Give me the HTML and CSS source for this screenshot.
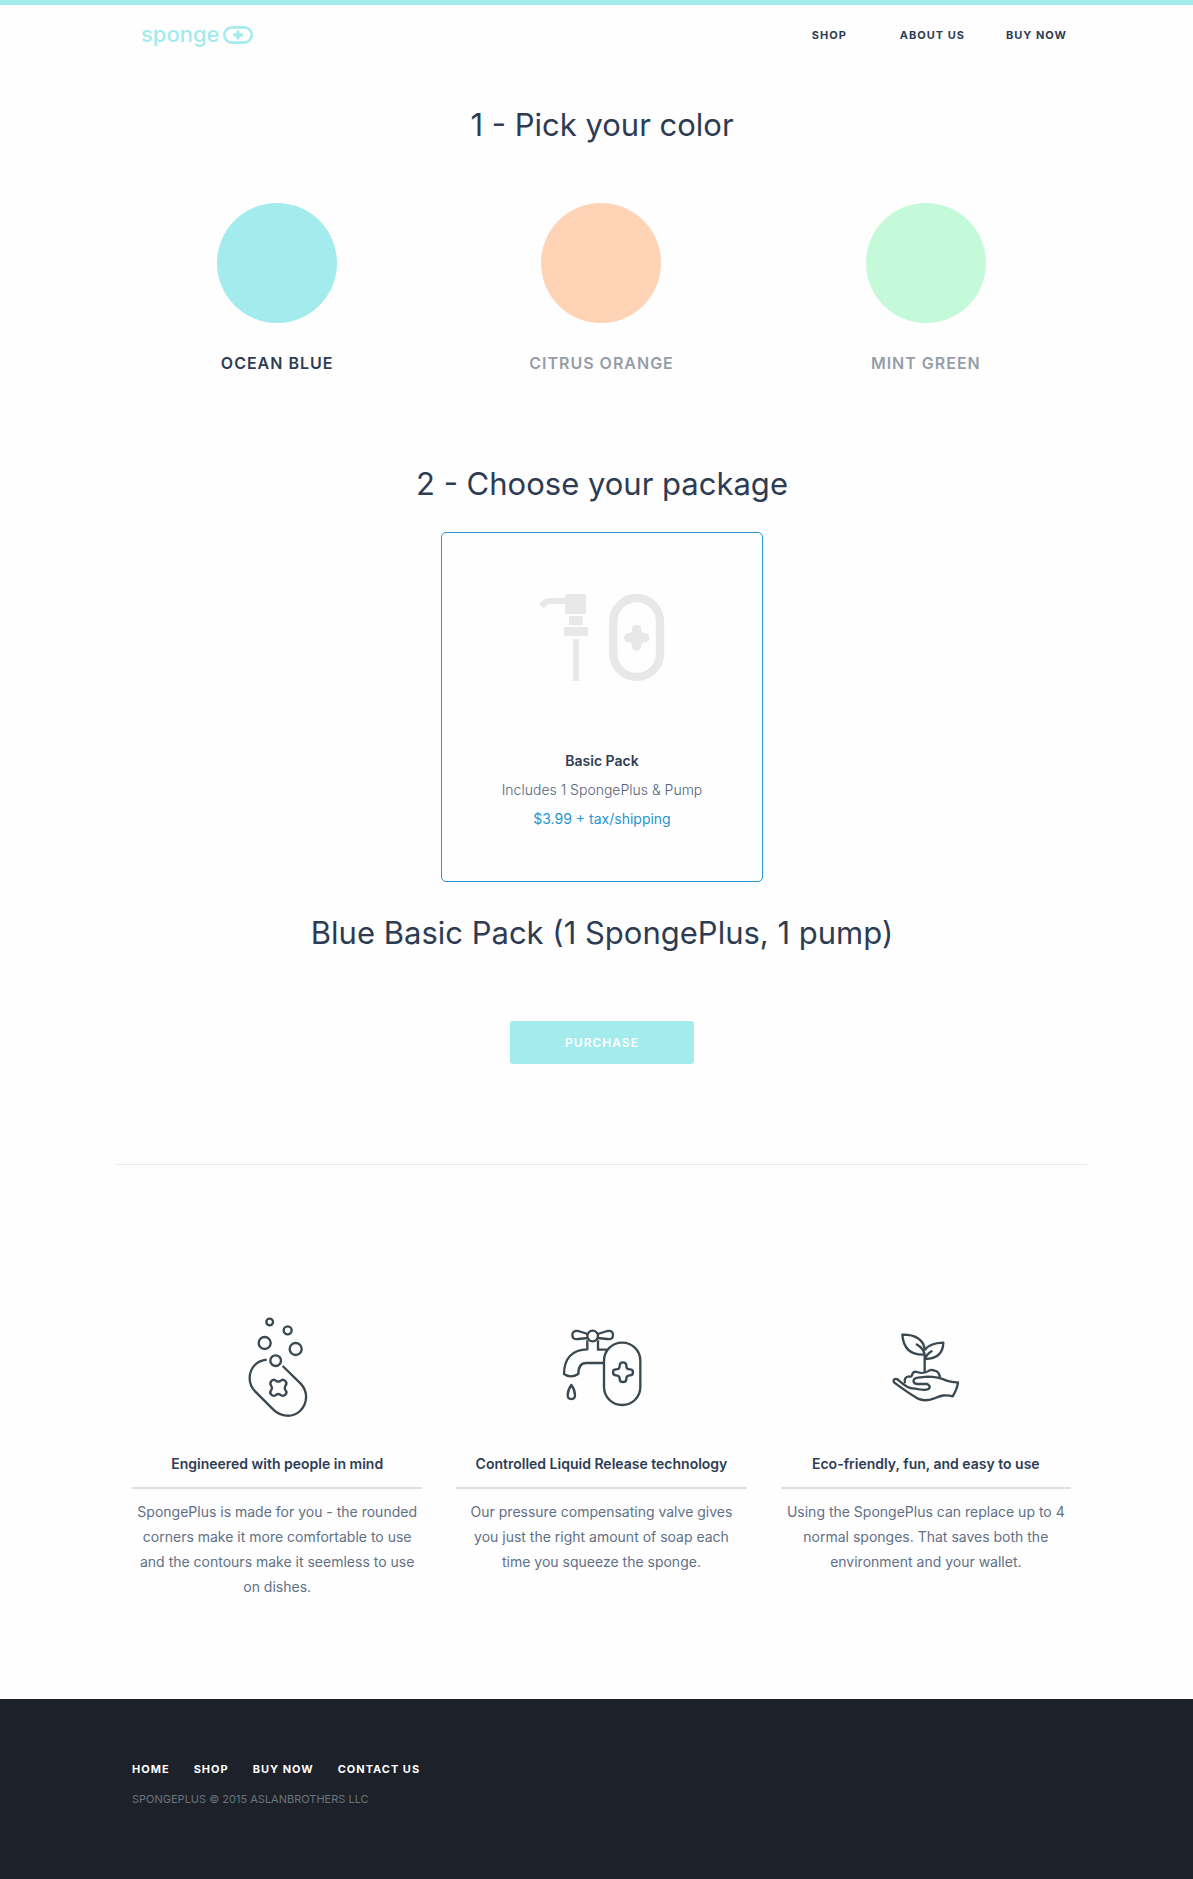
FILE: index.html
```html
<!DOCTYPE html>
<html lang="en">
<head>
<meta charset="utf-8">
<meta name="viewport" content="width=device-width, initial-scale=1">
<title>SpongePlus - Shop</title>
<link rel="stylesheet" href="styles.css">
</head>
<body>
<header class="site-header">
  <div class="container header-row">
    <a class="logo" href="#">
      <span>sponge</span>
      <svg class="logo-mark" viewBox="0 0 90 54" aria-hidden="true">
        <rect x="4" y="4" width="82" height="46" rx="23" fill="none" stroke="currentColor" stroke-width="8"/>
        <path d="M45 13c4 0 5 3 5 8 1 1 2 1 3 1 5 0 7 2 7 5s-2 5-7 5c-1 0-2 0-3 1 0 5-1 8-5 8s-5-3-5-8c-1-1-2-1-3-1-5 0-7-2-7-5s2-5 7-5c1 0 2 0 3-1 0-5 1-8 5-8z" fill="currentColor"/>
      </svg>
    </a>
    <nav class="main-nav" aria-label="Main">
      <a class="nav-lead" href="#">SHOP</a>
      <a href="#">ABOUT US</a>
      <a href="#">BUY NOW</a>
    </nav>
  </div>
</header>

<main class="container">
  <form class="order">
    <h1 class="heading" id="color-heading">1 - Pick your color</h1>
    <div class="colors" role="radiogroup" aria-labelledby="color-heading">
      <label class="color"><input class="swatch blue" type="radio" name="color" value="blue" checked><span>OCEAN BLUE</span></label>
      <label class="color"><input class="swatch orange" type="radio" name="color" value="orange"><span>CITRUS ORANGE</span></label>
      <label class="color"><input class="swatch green" type="radio" name="color" value="green"><span>MINT GREEN</span></label>
    </div>

    <h2 class="heading">2 - Choose your package</h2>
    <button class="package" type="button" aria-pressed="true">
      <svg class="package-icon" viewBox="-9 0 510 390" aria-hidden="true">
        <g fill="#e8e8e8">
          <path d="M57 103Q71 84 90 84H135V76Q137 74 143 73Q167 69 192 73Q198 74 198 77V129Q198 132 195 132H138Q135 132 135 129V102H92Q82 102 72 114z"/>
          <rect x="147" y="138" width="41" height="27" rx="2"/>
          <rect x="132" y="171" width="72" height="27" rx="2"/>
          <rect x="159" y="207" width="18" height="126" rx="2"/>
          <path d="M350 165c9 0 14 6 14 14 0 8 4 11 11 11 8 0 13 6 13 13s-5 14-13 14c-7 0-11 3-11 10 0 9-5 15-14 15s-14-6-14-15c0-7-4-10-11-10-8 0-13-6-13-14s5-13 13-13c7 0 11-3 11-11 0-8 5-14 14-14z"/>
        </g>
        <rect x="280" y="84" width="140" height="237" rx="70" fill="none" stroke="#e8e8e8" stroke-width="25"/>
      </svg>
      <span class="package-name">Basic Pack</span>
      <span class="package-info">Includes 1 SpongePlus &amp; Pump</span>
      <span class="package-price">$3.99 + tax/shipping</span>
    </button>

    <h2 class="heading">Blue Basic Pack (1 SpongePlus, 1 pump)</h2>
    <button class="purchase" type="submit">PURCHASE</button>
  </form>

  <hr class="divider">

  <section class="features" aria-label="Features">
    <article class="feature">
      <svg class="feature-icon" viewBox="-9 0 300 390" aria-hidden="true">
        <circle cx="119" cy="66" r="10"/>
        <circle cx="173" cy="91" r="12"/>
        <circle cx="104" cy="129" r="18"/>
        <circle cx="197" cy="147" r="18"/>
        <circle cx="137" cy="182" r="16"/>
        <path d="M110 179C75 183 59 208 59 235C59 252 66 265 76 275L130 329C153 352 189 353 210 333C234 310 234 274 212 251L158 198"/>
        <path d="M124 243c5-5 11-4 15 0q6 4 12 0c4-4 10-5 15 0s4 10 0 15q-4 6 0 12c4 4 4 10 0 14-5 5-11 4-15 0q-6-4-12 0c-4 4-10 5-15 0-4-4-4-10 0-14q4-6 0-12c-4-5-4-10 0-15z"/>
      </svg>
      <h3>Engineered with people in mind</h3>
      <p>SpongePlus is made for you - the rounded corners make it more comfortable to use and the contours make it seemless to use on dishes.</p>
    </article>
    <article class="feature">
      <svg class="feature-icon" viewBox="18 -30 300 390" aria-hidden="true">
        <circle cx="143" cy="78" r="16"/>
        <path d="M128 72L100 63C88 61 82 66 82 75S88 89 100 87L128 84M158 72L187 63C199 61 204 66 204 75S199 89 187 87L158 84"/>
        <path d="M127 91V118C83 118 57 145 57 192Q77 206 100 192C100 170 107 159 124 159H177M159 91V119H187"/>
        <path d="M79 225C85 233 90 246 90 256C90 271 68 271 68 256C68 246 73 233 79 225z"/>
        <rect x="177" y="98" width="109" height="187" rx="54"/>
        <path d="M234 157c6 0 10 4 10 10 0 8 4 11 11 11s9 4 9 9-3 9-9 9c-7 0-11 3-11 10 0 6-4 10-10 10s-10-4-10-10c0-7-4-10-11-10-5 0-9-4-9-9s4-9 9-9c7 0 11-3 11-11 0-6 4-10 10-10z"/>
      </svg>
      <h3>Controlled Liquid Release technology</h3>
      <p>Our pressure compensating valve gives you just the right amount of soap each time you squeeze the sponge.</p>
    </article>
    <article class="feature">
      <svg class="feature-icon" viewBox="-12 -60 300 390" aria-hidden="true">
        <path d="M134 156V101M108 72Q132 85 134 106M157 92Q138 103 134 120"/>
        <path d="M131 104C92 105 70 85 67 44C102 43 134 57 134 92"/>
        <path d="M135 90C144 75 163 69 190 68C189 98 173 116 136 117"/>
        <path d="M75 190Q70 172 87 169C94 172 96 168 98 160Q102 153 111 156C129 162 137 159 147 152Q155 147 163 152Q178 154 180 174"/>
        <path d="M145 192H112C96 190 97 175 114 173L143 170Q174 170 200 182Q219 188 234 187Q232 206 218 229C194 222 181 228 163 235Q134 246 114 236Q83 218 43 188C36 178 47 173 55 180C75 197 84 205 105 206C125 210 146 212 149 203Q150 195 140 192"/>
      </svg>
      <h3>Eco-friendly, fun, and easy to use</h3>
      <p>Using the SpongePlus can replace up to 4 normal sponges. That saves both the environment and your wallet.</p>
    </article>
  </section>
</main>

<footer class="site-footer">
  <div class="container footer-inner">
    <nav class="footer-nav" aria-label="Footer">
      <a href="#">HOME</a>
      <a href="#">SHOP</a>
      <a href="#">BUY NOW</a>
      <a href="#">CONTACT US</a>
    </nav>
    <p class="copyright">SPONGEPLUS © 2015 ASLANBROTHERS LLC</p>
  </div>
</footer>
</body>
</html>
```
FILE: styles.css
```css
:root {
  --ink: #2e3c53;
  --aqua: #a3ebec;
  --blue: #2794cf;
}

* {
  box-sizing: border-box;
}

body {
  margin: 0;
  background: #fefefe;
  color: var(--ink);
  font: 14px/20px Inter, "Liberation Sans", sans-serif;
}

h1, h2, h3, p {
  margin: 0;
}

a {
  color: inherit;
  text-decoration: none;
}

button {
  font: inherit;
  cursor: pointer;
}

.container {
  margin: 0 106px 0 117px;
}

/* Header */
.site-header {
  border-top: 5px solid var(--aqua);
}

.header-row {
  display: flex;
  align-items: center;
  justify-content: space-between;
  height: 60px;
  padding: 0 20px 0 24px;
}

.logo {
  display: flex;
  align-items: center;
  gap: 3px;
  color: var(--aqua);
  font-size: 22px;
  font-weight: 500;
  line-height: 24px;
}

.logo span {
  padding-bottom: 2px;
}

.logo-mark {
  width: 30px;
  height: 18px;
}

.main-nav,
.footer-nav {
  display: flex;
  font-size: 11px;
  font-weight: 700;
  letter-spacing: 1px;
}

.main-nav {
  gap: 41px;
}

.nav-lead {
  margin-right: 12px;
}

/* Order form */
.order {
  display: flex;
  flex-direction: column;
  align-items: center;
  padding-top: 40px;
}

.heading {
  font-size: 31px;
  font-weight: 400;
  line-height: 40px;
  text-align: center;
}

.colors,
.features {
  display: grid;
  grid-template-columns: repeat(3, 1fr);
  gap: 34px;
  padding: 0 16px 0 15px;
}

.colors {
  align-self: stretch;
  margin: 58px 0 89px;
}

.color {
  display: flex;
  flex-direction: column;
  align-items: center;
  gap: 28px;
  font-size: 16px;
  font-weight: 600;
  line-height: 24px;
  letter-spacing: 1px;
  cursor: pointer;
}

.color span {
  opacity: 0.5;
}

.swatch:checked + span {
  opacity: 1;
}

.swatch {
  appearance: none;
  width: 120px;
  height: 120px;
  margin: 0;
  border-radius: 50%;
  cursor: pointer;
}

.blue {
  background: var(--aqua);
}

.orange {
  background: #ffd3b5;
}

.green {
  background: #c4fad9;
}

.package {
  display: flex;
  flex-direction: column;
  align-items: center;
  width: 322px;
  max-width: 100%;
  margin: 28px 0 31px;
  padding: 37px 16px 48px;
  border: 1px solid var(--blue);
  border-radius: 5px;
  background: none;
  color: var(--ink);
  line-height: 29px;
}

.package-icon {
  width: 170px;
  height: 130px;
  margin-bottom: 46px;
}

.package-name {
  font-weight: 600;
}

.package-info {
  color: #56647a;
  font-weight: 300;
}

.package-price {
  color: var(--blue);
}

.purchase {
  width: 184px;
  height: 43px;
  margin-top: 68px;
  padding: 0;
  border: 0;
  border-radius: 3px;
  background: var(--aqua);
  color: #fff;
  font-size: 12px;
  font-weight: 600;
  letter-spacing: 1px;
}

.divider {
  height: 1px;
  margin: 100px 0 135px;
  border: 0;
  background: #eaeaea;
}

/* Features */
.feature {
  text-align: center;
}

.feature-icon {
  display: block;
  width: 100px;
  height: 130px;
  margin: 0 auto 24px;
  fill: none;
  stroke: #3b484f;
  stroke-width: 7;
  stroke-linejoin: round;
}

.feature h3 {
  padding-bottom: 13px;
  border-bottom: 2px solid #e0e0e0;
  font-size: 14px;
  font-weight: 600;
}

.feature p {
  padding: 10px 4px 0;
  color: #627086;
  line-height: 25px;
}

/* Footer */
.site-footer {
  margin-top: 100px;
  background: #1d2129;
}

.footer-inner {
  padding: 60px 15px 70px;
}

.footer-nav {
  gap: 24px;
  color: #fff;
}

.copyright {
  margin-top: 10px;
  color: #68757c;
  font-size: 11px;
}
```
